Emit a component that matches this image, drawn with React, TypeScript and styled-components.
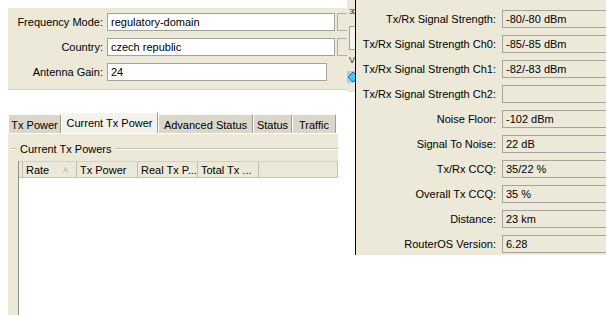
import React from "react";

import styled, {
  createGlobalStyle
} from "styled-components";

const GlobalStyle = createGlobalStyle`
  html, body {
    margin: 0;
    padding: 0;
    background: #fff;
    overflow: hidden;
  }

  body {
    font-family: "Liberation Sans", Arial, sans-serif;
    font-size: 11px;
    color: #000;
  }
`;

const ScDesktop = styled.div`
  position: relative;
  width: 606px;
  height: 315px;
  overflow: hidden;
  background: #fff;
`;

/* ---------- top-left settings window ---------- */

const ScSettings = styled.div`
  position: absolute;
  left: 8px;
  top: 8px;
  width: 339px;
  height: 82px;
  box-sizing: border-box;
  padding-top: 5px;
  background: #ece9d8;
  border-bottom: 1px solid #d6d2c0;
  overflow: hidden;
  display: grid;
  grid-template-columns: 95px 1fr;
  column-gap: 4px;
  row-gap: 7px;
  align-content: start;
`;

const ScLabel = styled.div`
  height: 18px;
  line-height: 18px;
  text-align: right;
  white-space: nowrap;
`;

const ScField = styled.div`
  display: flex;
  gap: 2px;
  height: 18px;
`;

interface IPropsScInput {
  $width: number;
}

const ScInput = styled.div<IPropsScInput>`
  width: ${props => props.$width}px;
  flex: none;
  box-sizing: border-box;
  height: 18px;
  line-height: 16px;
  padding-left: 3px;
  background: #fff;
  border: 1px solid #a3a29c;
  white-space: nowrap;
`;

const ScDropButton = styled.div`
  width: 20px;
  flex: none;
  box-sizing: border-box;
  height: 18px;
  background: #ece9d8;
  border: 1px solid #b1aea0;
`;

/* ---------- sliver of a window behind ---------- */

const ScSliver = styled.div`
  position: absolute;
  left: 347px;
  top: 0;
  width: 8px;
  height: 92px;
  background: #ece9d8;
  overflow: hidden;
  display: flex;
  flex-direction: column;
  align-items: flex-start;
`;

const ScSliverText = styled.span`
  margin: 8px 0 0 2px;
  font-size: 8px;
  line-height: 8px;
  letter-spacing: -1px;
  white-space: nowrap;
  color: #333;
`;

const ScSliverBox = styled.div`
  margin: 10px 0 0 2px;
  width: 10px;
  height: 22px;
  border: 1px solid #a3a29c;
  background: #f4f3ee;
`;

const ScSliverV = styled.span`
  margin: 6px 0 0 2px;
  font-size: 9px;
  line-height: 9px;
  color: #333;
`;

/* ---------- right status window ---------- */

const ScStatus = styled.div`
  position: absolute;
  left: 355px;
  top: 0;
  width: 251px;
  height: 255px;
  box-sizing: border-box;
  padding-top: 10px;
  background: #ece9d8;
  border-left: 1px solid #000;
  overflow: hidden;
  display: grid;
  grid-template-columns: 140px 130px;
  column-gap: 6px;
  row-gap: 7px;
  align-content: start;
`;

const ScValue = styled.div`
  box-sizing: border-box;
  height: 18px;
  line-height: 16px;
  padding-left: 3px;
  background: #ece9d8;
  border: 1px solid #a4a39d;
  white-space: nowrap;
`;

/* ---------- bottom-left tabbed window ---------- */

const ScTabWindow = styled.div`
  position: absolute;
  left: 8px;
  top: 112px;
  width: 330px;
  height: 213px;
  display: flex;
  flex-direction: column;
`;

const ScTabBar = styled.div`
  display: flex;
  align-items: flex-end;
  height: 21px;
  flex: none;
`;

interface IPropsScTab {
  $width: number;
  $active?: boolean;
}

const ScTab = styled.div<IPropsScTab>`
  width: ${props => props.$width}px;
  height: ${props => (props.$active ? 21 : 19)}px;
  box-sizing: border-box;
  flex: none;
  display: flex;
  align-items: center;
  justify-content: center;
  padding-top: ${props => (props.$active ? 0 : 1)}px;
  background: ${props => (props.$active ? "#f3f2ec" : "#dad7ca")};
  border-top: 1px solid #fff;
  border-left: 1px solid #fff;
  border-right: 1px solid #a19e90;
  white-space: nowrap;
`;

const ScTabPanel = styled.div`
  flex: 1;
  display: flex;
  flex-direction: column;
  padding-top: 8px;
  background: #ece9d8;
  border-top: 1px solid #fff;
`;

const ScGroupTitle = styled.div`
  display: flex;
  align-items: center;
  gap: 3px;
  height: 13px;
  padding-left: 2px;
  white-space: nowrap;

  &::before,
  &::after {
    content: "";
    height: 1px;
    background: #c4c1b2;
    border-bottom: 1px solid #fff;
  }

  &::before {
    width: 7px;
  }

  &::after {
    flex: 1;
  }
`;

const ScList = styled.div`
  flex: 1;
  display: flex;
  flex-direction: column;
  margin: 6px 0 0 10px;
  background: #fff;
  border-left: 1px solid #8f8d86;
`;

const ScHeader = styled.div`
  display: flex;
  height: 17px;
  box-sizing: border-box;
  background: #ece9d8;
  border-top: 1px solid #d4d0c0;
  border-bottom: 1px solid #c8c5b6;
`;

interface IPropsScColumn {
  $width?: number;
}

const ScColumn = styled.div<IPropsScColumn>`
  ${props => (props.$width ? `width: ${props.$width}px; flex: none;` : "flex: 1;")}
  box-sizing: border-box;
  position: relative;
  display: flex;
  align-items: center;
  padding-left: 3px;
  border-right: 1px solid #c2bfb0;
  white-space: nowrap;
  overflow: hidden;
`;

const ScSortMark = styled.svg`
  position: absolute;
  right: 8px;
  top: 5px;
`;

const ScListBody = styled.div`
  flex: 1;
  background: #fff;
`;

const SETTINGS = [
  { k: "Frequency Mode:", v: "regulatory-domain", w: 228, drop: true },
  { k: "Country:", v: "czech republic", w: 228, drop: true },
  { k: "Antenna Gain:", v: "24", w: 220, drop: false }
];

const STATUS = [
  ["Tx/Rx Signal Strength:", "-80/-80 dBm"],
  ["Tx/Rx Signal Strength Ch0:", "-85/-85 dBm"],
  ["Tx/Rx Signal Strength Ch1:", "-82/-83 dBm"],
  ["Tx/Rx Signal Strength Ch2:", ""],
  ["Noise Floor:", "-102 dBm"],
  ["Signal To Noise:", "22 dB"],
  ["Tx/Rx CCQ:", "35/22 %"],
  ["Overall Tx CCQ:", "35 %"],
  ["Distance:", "23 km"],
  ["RouterOS Version:", "6.28"]
];

const TABS = [
  { label: "Tx Power", w: 53 },
  { label: "Current Tx Power", w: 97, active: true },
  { label: "Advanced Status", w: 95 },
  { label: "Status", w: 39 },
  { label: "Traffic", w: 44 }
];

const COLUMNS = [
  { label: "", w: 4 },
  { label: "Rate", w: 54, sorted: true },
  { label: "Tx Power", w: 61 },
  { label: "Real Tx P...", w: 60 },
  { label: "Total Tx ...", w: 61 }
];

export default function App(): React.ReactElement {
  return <>
    <GlobalStyle />
    <ScDesktop>
      <ScSettings>
        {SETTINGS.map(({
          k,
          v,
          w,
          drop
        }) => <React.Fragment key={k}>
          <ScLabel>{k}</ScLabel>
          <ScField>
            <ScInput $width={w}>{v}</ScInput>
            {drop ? <ScDropButton /> : null}
          </ScField>
        </React.Fragment>)}
      </ScSettings>

      <ScSliver>
        <ScSliverText>30</ScSliverText>
        <ScSliverBox />
        <ScSliverV>V</ScSliverV>
        <svg width="8" height="12" viewBox="0 0 8 12" style={{ marginTop: 6 }}>
          <rect x="0" y="0" width="8" height="12" fill="#b9c3e6" />
          <path d="M1 6 L6 1 L11 6 L6 11 Z" fill="#49c8e8" stroke="#1b6fb8" strokeWidth="1" />
        </svg>
      </ScSliver>

      <ScStatus>
        {STATUS.map(([k, v]) => <React.Fragment key={k}>
          <ScLabel>{k}</ScLabel>
          <ScValue>{v}</ScValue>
        </React.Fragment>)}
      </ScStatus>

      <ScTabWindow>
        <ScTabBar>
          {TABS.map(({
            label,
            w,
            active
          }) => <ScTab key={label} $width={w} $active={active}>
            {label}
          </ScTab>)}
        </ScTabBar>

        <ScTabPanel>
          <ScGroupTitle>Current Tx Powers</ScGroupTitle>
          <ScList>
            <ScHeader>
              {COLUMNS.map(({
                label,
                w,
                sorted
              }, i) => <ScColumn key={i} $width={w}>
                {label}
                {sorted ? <ScSortMark width="5" height="6" viewBox="0 0 5 6">
                  <path d="M0.5 5.5 L2.5 0.5 L4.5 5.5" fill="none" stroke="#b8b5a6" strokeWidth="1" />
                </ScSortMark> : null}
              </ScColumn>)}
              <ScColumn />
            </ScHeader>
            <ScListBody />
          </ScList>
        </ScTabPanel>
      </ScTabWindow>
    </ScDesktop>
  </>;
}
